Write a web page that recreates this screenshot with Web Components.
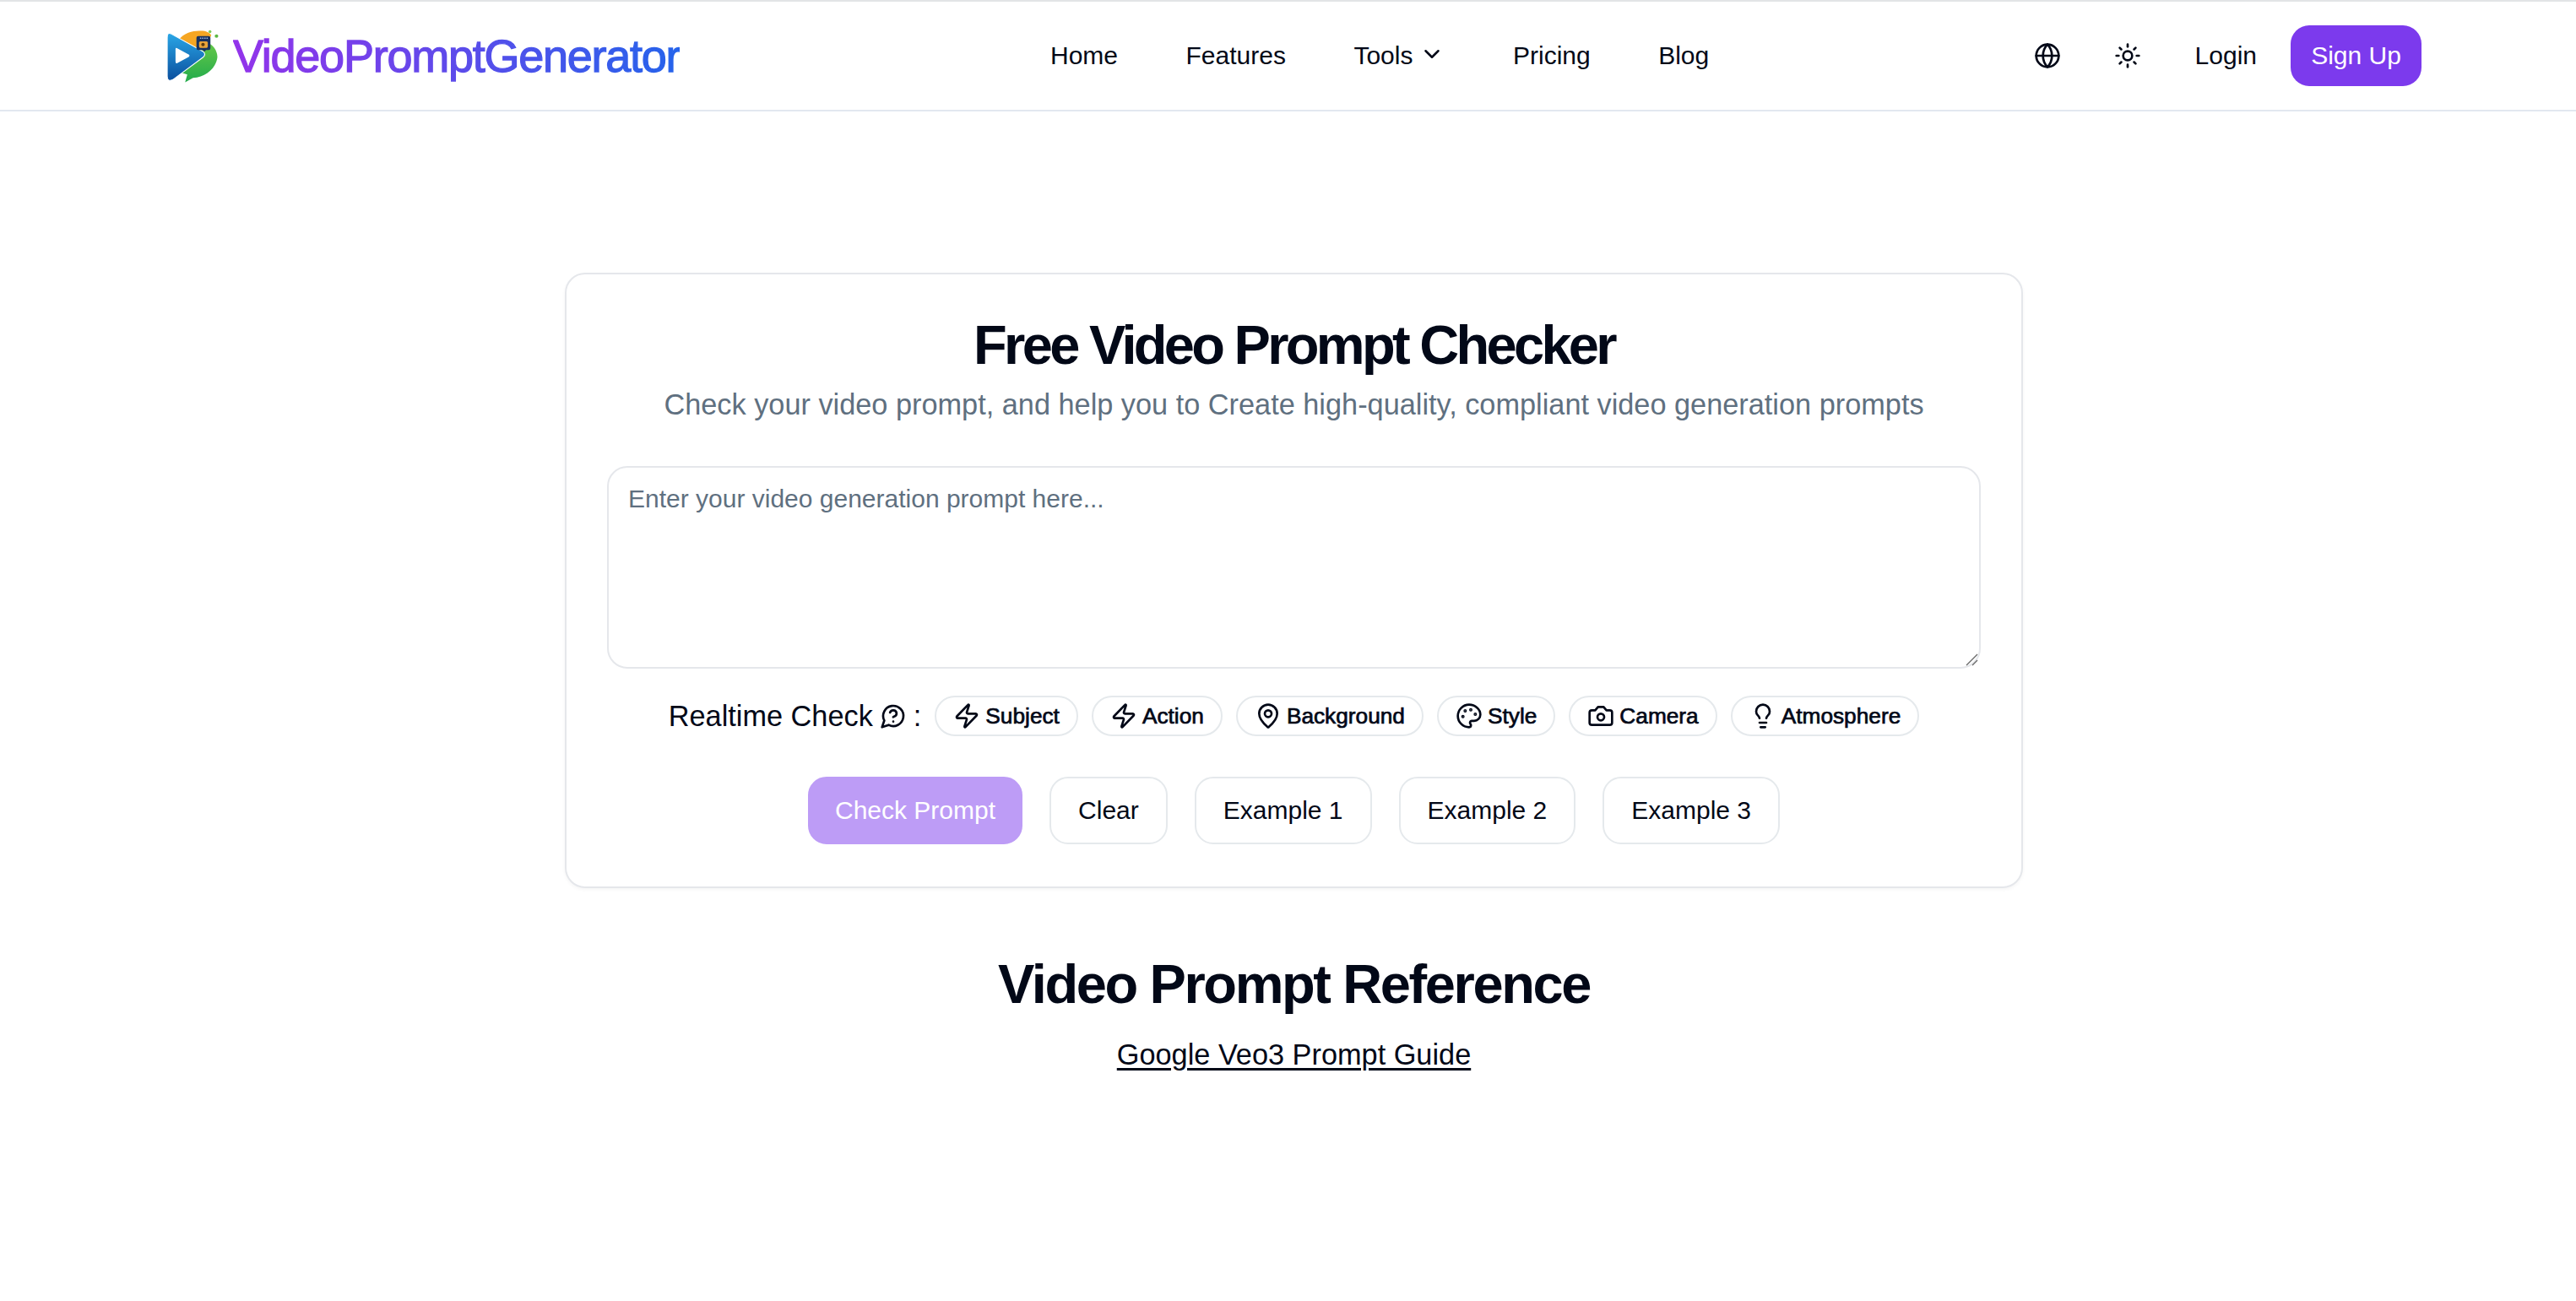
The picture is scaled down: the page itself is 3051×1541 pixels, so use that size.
<!DOCTYPE html>
<html lang="en"><head><meta charset="utf-8"><title>Free Video Prompt Checker</title>
<style>
html,body{margin:0;background:#fff;}
body{font-family:"Liberation Sans",Arial,sans-serif;color:#020817;min-height:1541px;}
</style></head><body>
<site-header></site-header>
<main-page></main-page>
<script>
const P={
zap:'<path d="M4 14a1 1 0 0 1-.78-1.63l9.9-10.2a.5.5 0 0 1 .86.46l-1.92 6.02A1 1 0 0 0 13 10h7a1 1 0 0 1 .78 1.63l-9.9 10.2a.5.5 0 0 1-.86-.46l1.92-6.02A1 1 0 0 0 11 14z"/>',
pin:'<path d="M20 10c0 4.993-5.539 10.193-7.399 11.799a1 1 0 0 1-1.202 0C9.539 20.193 4 14.993 4 10a8 8 0 0 1 16 0"/><circle cx="12" cy="10" r="3"/>',
palette:'<circle cx="13.5" cy="6.5" r=".5" fill="currentColor"/><circle cx="17.5" cy="10.5" r=".5" fill="currentColor"/><circle cx="8.5" cy="7.5" r=".5" fill="currentColor"/><circle cx="6.5" cy="12.5" r=".5" fill="currentColor"/><path d="M12 2C6.5 2 2 6.5 2 12s4.5 10 10 10c.926 0 1.648-.746 1.648-1.688 0-.437-.18-.835-.437-1.125-.29-.289-.438-.652-.438-1.125a1.64 1.64 0 0 1 1.668-1.668h1.996c3.051 0 5.555-2.503 5.555-5.554C21.965 6.012 17.461 2 12 2z"/>',
camera:'<path d="M14.5 4h-5L7 7H4a2 2 0 0 0-2 2v9a2 2 0 0 0 2 2h16a2 2 0 0 0 2-2V9a2 2 0 0 0-2-2h-3l-2.5-3z"/><circle cx="12" cy="13" r="3"/>',
bulb:'<path d="M15 14c.2-1 .7-1.7 1.5-2.5 1-.9 1.5-2.2 1.5-3.5A6 6 0 0 0 6 8c0 1 .2 2.2 1.5 3.5.7.7 1.3 1.5 1.5 2.5"/><path d="M9 18h6"/><path d="M10 22h4"/>',
help:'<path d="M7.9 20A9 9 0 1 0 4 16.1L2 22Z"/><path d="M9.09 9a3 3 0 0 1 5.83 1c0 2-3 3-3 3"/><path d="M12 17h.01"/>',
globe:'<circle cx="12" cy="12" r="10"/><path d="M12 2a14.5 14.5 0 0 0 0 20 14.5 14.5 0 0 0 0-20"/><path d="M2 12h20"/>',
sun:'<circle cx="12" cy="12" r="4"/><path d="M12 2v2"/><path d="M12 20v2"/><path d="m4.93 4.93 1.41 1.41"/><path d="m17.66 17.66 1.41 1.41"/><path d="M2 12h2"/><path d="M20 12h2"/><path d="m6.34 17.66-1.41 1.41"/><path d="m19.07 4.93-1.41 1.41"/>',
chev:'<path d="m6 9 6 6 6-6"/>'
};
class UiIcon extends HTMLElement{
 connectedCallback(){
  const s=this.getAttribute('size')||30,n=this.getAttribute('name');
  this.attachShadow({mode:'open'}).innerHTML=`<style>:host{display:inline-flex;flex:none;width:${s}px;height:${s}px}svg{width:100%;height:100%;display:block}</style><svg viewBox="0 0 24 24" fill="none" stroke="currentColor" stroke-width="2" stroke-linecap="round" stroke-linejoin="round">${P[n]}</svg>`;
 }
}
customElements.define('ui-icon',UiIcon);

class BrandLogo extends HTMLElement{
 connectedCallback(){
  this.attachShadow({mode:'open'}).innerHTML=`<style>
  :host{display:flex;align-items:center;gap:6px}
  svg{width:90px;height:90px;display:block;flex:none}
  span{font-size:54px;line-height:62px;letter-spacing:-1.25px;font-weight:400;-webkit-text-stroke:1.3px transparent;margin-top:-1px;
   background:linear-gradient(90deg,#9333ea,#2563eb);-webkit-background-clip:text;background-clip:text;color:transparent;white-space:nowrap}
  </style>
  <svg viewBox="0 0 90 90"><defs>
  <linearGradient id="b" x1="0" y1="0" x2="0" y2="1"><stop offset="0" stop-color="#29a6e6"/><stop offset="1" stop-color="#0b4f9e"/></linearGradient>
  <linearGradient id="g" x1="0" y1="0" x2="0" y2="1"><stop offset="0" stop-color="#66c848"/><stop offset="1" stop-color="#22ab4c"/></linearGradient></defs>
  <g transform="scale(1.033)">
  <path d="M31 25C37 17 48 14.500 56 15C62 15 66 17 68 20L58 42Z" fill="#f5a623"/>
  <path d="M62 28C70 30 75 38 75 45C74 57 62 68 47 69L38 74L40.500 65L30 62L56 38Z" fill="url(#g)"/>
  <circle cx="66.5" cy="16" r="1.7" fill="#7ccb5a"/><circle cx="74" cy="21" r="2" fill="#5cb944"/>
  <path d="M22 18.500L59 39Q62 42 59 45L24 71Q17.500 74 17.500 67V23Q17.500 16 22 18.500Z" fill="url(#b)" stroke="#fff" stroke-width="1"/>
  <path d="M29 35Q27 34 27 36V50Q27 53 29 52L42 45Q44 43 42 42Z" fill="#fff"/>
  <path d="M53 21H65Q67 21 67 23V35Q67 37 65 37H62L60 39L58 37H53Q51 37 51 35V23Q51 21 53 21Z" fill="#16305f"/>
  <rect x="54" y="27" width="10" height="7.5" rx="1.5" fill="#e8a33a"/><circle cx="58.500" cy="30.700" r="2" fill="#5a3a10"/>
  <path d="M55 23.500h9" stroke="#9fb6d8" stroke-width="1.400" stroke-dasharray="1.500 1"/>
  </g></svg>
  <span>VideoPromptGenerator</span>`;
 }
}
customElements.define('brand-logo',BrandLogo);

class NavLink extends HTMLElement{
 connectedCallback(){
  this.attachShadow({mode:'open'}).innerHTML=`<style>:host{display:inline-flex;align-items:center;gap:8px;font-size:30px;line-height:45px;color:#020817;white-space:nowrap}</style><slot></slot>`;
 }
}
customElements.define('nav-link',NavLink);

class SiteHeader extends HTMLElement{
 connectedCallback(){
  this.attachShadow({mode:'open'}).innerHTML=`<style>
  :host{display:flex;box-sizing:border-box;height:132px;align-items:center;padding:0 183px 0 180px;border-top:2px solid #e2e4e6;border-bottom:2px solid #e2e8f0;background:#fff}
  brand-logo{width:1064px;flex:none}
  nav{display:flex;gap:80.5px;align-items:center;margin-top:-1px}
  .r{margin-left:auto;display:flex;align-items:center}
  .r ui-icon:nth-child(2){margin-left:63px}
  .login{margin-left:64px;margin-top:-1px}
  .su{margin-left:40px;display:flex;align-items:center;height:72px;width:155px;justify-content:center;background:#7c3aed;color:#fff;border-radius:22px;font-size:30px}
  ui-icon[name=chev]{margin-top:-4px}
  </style>
  <brand-logo></brand-logo>
  <nav><nav-link>Home</nav-link><nav-link>Features</nav-link><nav-link>Tools <ui-icon name="chev" size="30"></ui-icon></nav-link><nav-link>Pricing</nav-link><nav-link>Blog</nav-link></nav>
  <div class="r"><ui-icon name="globe" size="32"></ui-icon><ui-icon name="sun" size="32"></ui-icon><nav-link class="login">Login</nav-link><span class="su">Sign Up</span></div>`;
 }
}
customElements.define('site-header',SiteHeader);

class CheckChip extends HTMLElement{
 connectedCallback(){
  this.attachShadow({mode:'open'}).innerHTML=`<style>
  :host{display:inline-flex;align-items:center;gap:6px;box-sizing:border-box;height:48px;padding:0 20px;border:2px solid #e5e9ec;border-radius:999px;font-size:26.25px;-webkit-text-stroke:.7px currentColor;color:#020817;white-space:nowrap}
  ui-icon{-webkit-text-stroke:0}
  </style><ui-icon name="${this.getAttribute('icon')}" size="32"></ui-icon><slot></slot>`;
 }
}
customElements.define('check-chip',CheckChip);

class ActionButton extends HTMLElement{
 connectedCallback(){
  this.attachShadow({mode:'open'}).innerHTML=`<style>
  :host{display:inline-flex;align-items:center;justify-content:center;box-sizing:border-box;height:80px;padding:0 32px;border:2px solid #e5e9ec;border-radius:22px;font-size:30px;color:#020817;white-space:nowrap;background:#fff}
  :host([primary]){background:#bd9cf6;border-color:#bd9cf6;color:#fff;padding:0 30px}
  </style><slot></slot>`;
 }
}
customElements.define('action-button',ActionButton);

class PromptInput extends HTMLElement{
 connectedCallback(){
  this.attachShadow({mode:'open'}).innerHTML=`<style>
  :host{display:block;position:relative;height:240px}
  textarea{display:block;box-sizing:border-box;width:100%;height:100%;padding:14px 23px;border:2px solid #e5e7eb;border-radius:24px;font:30px/45px "Liberation Sans",Arial,sans-serif;color:#020817;background:#fff;outline:0;resize:none}
  textarea::placeholder{color:#5f7080;opacity:1}
  svg{position:absolute;right:3px;bottom:3px;width:15px;height:15px}
  </style>
  <textarea placeholder="Enter your video generation prompt here..."></textarea>
  <svg viewBox="0 0 15 15" fill="none" stroke="#666" stroke-width="1.3"><path d="M1 14 14 1"/><path d="M8 14 14 8"/></svg>`;
 }
}
customElements.define('prompt-input',PromptInput);

class CheckerCard extends HTMLElement{
 connectedCallback(){
  this.attachShadow({mode:'open'}).innerHTML=`<style>
  :host{display:block;box-sizing:border-box;width:1727px;height:729px;padding:45px 48px 0;border:2px solid #e5e7eb;border-radius:24px;box-shadow:0 2px 4px rgba(0,0,0,.04);background:#fff;text-align:center}
  h1{margin:0;font-size:65px;line-height:78px;font-weight:700;letter-spacing:-3.7px;color:#020817}
  p{margin:6px 0 0;font-size:34.3px;line-height:50px;color:#5f7080;white-space:nowrap}
  prompt-input{margin-top:48px}
  .row{display:flex;justify-content:center;align-items:center;gap:16px;margin-top:32px}
  .lab{display:inline-flex;align-items:center;gap:8px;font-size:34.3px;white-space:nowrap}
  .btns{display:flex;justify-content:center;gap:32px;margin-top:48px}
  </style>
  <h1>Free Video Prompt Checker</h1>
  <p>Check your video prompt, and help you to Create high-quality, compliant video generation prompts</p>
  <prompt-input></prompt-input>
  <div class="row"><span class="lab">Realtime Check <ui-icon name="help" size="32"></ui-icon> :</span>
  <check-chip icon="zap">Subject</check-chip><check-chip icon="zap">Action</check-chip><check-chip icon="pin">Background</check-chip><check-chip icon="palette">Style</check-chip><check-chip icon="camera">Camera</check-chip><check-chip icon="bulb">Atmosphere</check-chip></div>
  <div class="btns"><action-button primary>Check Prompt</action-button><action-button>Clear</action-button><action-button>Example 1</action-button><action-button>Example 2</action-button><action-button>Example 3</action-button></div>`;
 }
}
customElements.define('checker-card',CheckerCard);

class MainPage extends HTMLElement{
 connectedCallback(){
  this.attachShadow({mode:'open'}).innerHTML=`<style>
  :host{display:block;padding:191px 0 0 669px}
  section{width:1727px;text-align:center;margin-top:76px}
  h2{margin:0;font-size:65px;line-height:76px;font-weight:700;letter-spacing:-2.4px;color:#020817}
  a{display:inline-block;margin-top:20px;font-size:34.3px;line-height:50px;color:#020817;text-decoration:underline;text-decoration-thickness:3px;text-underline-offset:4px}
  </style>
  <checker-card></checker-card>
  <section><h2>Video Prompt Reference</h2><a>Google Veo3 Prompt Guide</a></section>`;
 }
}
customElements.define('main-page',MainPage);
</script>
</body></html>
